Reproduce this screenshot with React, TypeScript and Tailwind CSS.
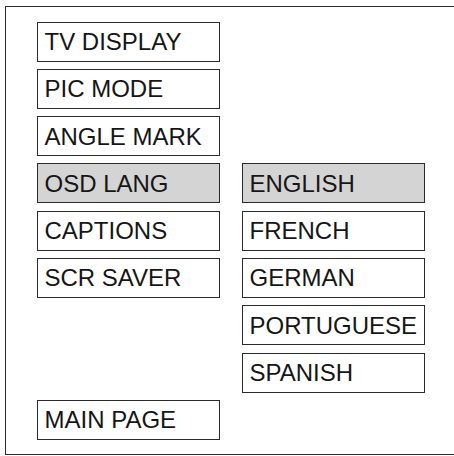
const leftItems = [
  'TV DISPLAY',
  'PIC MODE',
  'ANGLE MARK',
  'OSD LANG',
  'CAPTIONS',
  'SCR SAVER',
];

const languages = ['ENGLISH', 'FRENCH', 'GERMAN', 'PORTUGUESE', 'SPANISH'];

function MenuBox({ label, active }: { label: string; active?: boolean }) {
  return (
    <div
      className={
        'h-[40px] w-[183px] flex items-center pl-[7px] pt-[1px] border-[1.5px] border-[#2b2b2b] text-[24px] leading-none text-[#161616] ' +
        (active ? 'bg-[#d4d4d4]' : 'bg-white')
      }
    >
      {label}
    </div>
  );
}

export default function App() {
  return (
    <div
      className="w-[454px] h-[456px] overflow-hidden bg-white"
      style={{ fontFamily: '"Liberation Sans", Arial, sans-serif' }}
    >
      <div className="ml-[5px] mt-[6px] h-[449px] w-[460px] border-[1.5px] border-r-0 border-[#2b2b2b] pl-[30.5px] pt-[14.5px]">
        <div className="grid grid-cols-[183px_183px] grid-rows-[repeat(9,40px)] gap-x-[22px] gap-y-[7.3px]">
          {leftItems.map((item, i) => (
            <div key={item} className="col-start-1" style={{ gridRowStart: i + 1 }}>
              <MenuBox label={item} active={item === 'OSD LANG'} />
            </div>
          ))}
          {languages.map((lang, i) => (
            <div key={lang} className="col-start-2" style={{ gridRowStart: i + 4 }}>
              <MenuBox label={lang} active={lang === 'ENGLISH'} />
            </div>
          ))}
          <div className="col-start-1 row-start-9">
            <MenuBox label="MAIN PAGE" />
          </div>
        </div>
      </div>
    </div>
  );
}
